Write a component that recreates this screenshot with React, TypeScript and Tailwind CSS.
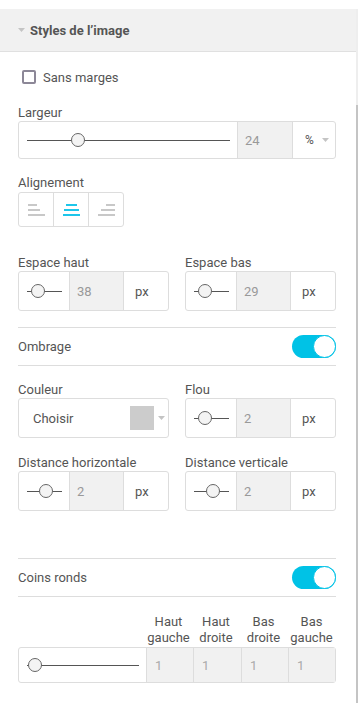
import React from 'react'

const Slider = ({ pos, className }: { pos: number; className?: string }) => (
  <div className={`relative h-full ${className ?? ''}`}>
    <div className="absolute left-[8px] right-[7px] top-1/2 h-px bg-[#555]" />
    <div
      className="absolute top-1/2 h-[14px] w-[14px] -translate-x-1/2 -translate-y-1/2 rounded-full border border-[#666] bg-[#f4f4f4]"
      style={{ left: pos }}
    />
  </div>
)

const Caret = ({ className }: { className?: string }) => (
  <svg width="7" height="4" viewBox="0 0 7 4" className={className}>
    <path d="M0 0h7L3.5 4z" fill="#c4c4c4" />
  </svg>
)

const Toggle = () => (
  <div className="flex h-[23px] w-[44px] items-center justify-end rounded-full bg-[#00c2e6]">
    <div className="h-[23px] w-[23px] rounded-full border-[1.5px] border-[#00c2e6] bg-white" />
  </div>
)

const AlignIcon = ({ kind, active }: { kind: 'l' | 'c' | 'r'; active?: boolean }) => {
  const c = active ? '#1ec6ea' : '#c8c8c8'
  const widths = kind === 'l' ? [9, 12, 17] : kind === 'c' ? [11, 15, 17] : [9, 14, 17]
  return (
    <svg width="17" height="12" viewBox="0 0 17 12">
      {widths.map((w, i) => {
        const x = kind === 'l' ? 0 : kind === 'c' ? (17 - w) / 2 : 17 - w
        return <rect key={i} x={x} y={i * 5} width={w} height="2" fill={c} />
      })}
    </svg>
  )
}

const Label = ({ children, className }: { children: React.ReactNode; className?: string }) => (
  <div className={`text-[13px] leading-[15px] text-[#555] ${className ?? ''}`}>{children}</div>
)

const SmallField = ({ label, value, pos }: { label: string; value: string; pos: number }) => (
  <div className="w-[151px]">
    <Label className="mb-[1px]">{label}</Label>
    <div className="flex h-[40px] rounded-[3px] border border-[#ddd]">
      <Slider pos={pos} className="w-[50px]" />
      <div className="flex w-[55px] items-center border-x border-[#ddd] bg-[#f1f1f1] pl-[7px] text-[13px] text-[#999]">
        {value}
      </div>
      <div className="flex flex-1 items-center pl-[11px] text-[13px] text-[#555]">px</div>
    </div>
  </div>
)

export default function App() {
  return (
    <div className="relative h-[703px] w-[358px] overflow-hidden bg-white font-['Roboto',sans-serif] leading-[15px] text-[#555]">
      {/* scrollbar */}
      <div className="absolute right-0 top-[9px] bottom-0 w-[2px] bg-[#eee]" />
      <div className="absolute right-0 top-[105px] bottom-0 w-[2px] bg-[#c4c4c4]" />

      <div className="pt-[9px] pr-[2px]">
        <div className="flex h-[43px] items-center border-b border-[#e0e0e0] bg-[#f1f1f1] pl-[18px]">
          <Caret className="mr-[5px]" />
          <span className="text-[13px] font-bold text-[#555]">Styles de l’image</span>
        </div>

        <div className="w-[318px] ml-[18px]">
          <label className="mt-[18px] ml-[4px] flex h-[14px] items-center">
            <span className="h-[14px] w-[14px] rounded-[2px] border-2 border-[#8c8797]" />
            <span className="ml-[7px] text-[13px] text-[#555]">Sans marges</span>
          </label>

          <Label className="mt-[21px] mb-[1px]">Largeur</Label>
          <div className="flex h-[38px] w-[318px] rounded-[3px] border border-[#ddd]">
            <Slider pos={59} className="w-[218px]" />
            <div className="flex w-[56px] items-center border-x border-[#ddd] bg-[#f1f1f1] pl-[7px] text-[13px] text-[#999]">
              24
            </div>
            <div className="flex flex-1 items-center pl-[12px] text-[12px] text-[#555]">
              <span>%</span>
              <Caret className="ml-[8px]" />
            </div>
          </div>

          <Label className="mt-[16px] mb-[2px]">Alignement</Label>
          <div className="flex h-[35px] w-[106px] rounded-[3px] border border-[#ddd]">
            <div className="flex flex-1 items-center justify-center">
              <AlignIcon kind="l" />
            </div>
            <div className="flex flex-1 items-center justify-center border-x border-[#ddd]">
              <AlignIcon kind="c" active />
            </div>
            <div className="flex flex-1 items-center justify-center">
              <AlignIcon kind="r" />
            </div>
          </div>

          <div className="mt-[28px] flex justify-between">
            <SmallField label="Espace haut" value="38" pos={19} />
            <SmallField label="Espace bas" value="29" pos={19} />
          </div>

          <div className="mt-[16px] flex h-[39px] items-center justify-between border-y border-[#ddd]">
            <span className="text-[13px] text-[#555]">Ombrage</span>
            <Toggle />
          </div>

          <div className="mt-[16px] flex justify-between">
            <div className="w-[151px]">
              <Label className="mb-[1px]">Couleur</Label>
              <div className="flex h-[40px] items-center rounded-[3px] border border-[#ddd] pl-[14px] pr-[3px]">
                <span className="flex-1 text-[13px] text-[#555]">Choisir</span>
                <span className="h-[24px] w-[24px] bg-[#ccc]" />
                <Caret className="ml-[4px]" />
              </div>
            </div>
            <SmallField label="Flou" value="2" pos={19} />
          </div>

          <div className="mt-[17px] flex justify-between">
            <SmallField label="Distance horizontale" value="2" pos={27} />
            <SmallField label="Distance verticale" value="2" pos={27} />
          </div>

          <div className="mt-[47px] flex h-[39px] items-center justify-between border-y border-[#ddd]">
            <span className="text-[13px] text-[#555]">Coins ronds</span>
            <Toggle />
          </div>

          <div className="mt-[17px] flex w-[318px] pl-[127px] text-center text-[13px] leading-[16px] text-[#555]">
            <div className="w-[47px]">Haut<br />gauche</div>
            <div className="w-[48px]">Haut<br />droite</div>
            <div className="w-[47px]">Bas<br />droite</div>
            <div className="flex-1">Bas<br />gauche</div>
          </div>
          <div className="mt-[1px] flex h-[36px] w-[318px] rounded-[3px] border border-[#ddd]">
            <Slider pos={16} className="w-[127px]" />
            {['1', '1', '1', '1'].map((v, i) => (
              <div
                key={i}
                className={`flex items-center border-l border-[#ddd] bg-[#f1f1f1] pl-[8px] text-[13px] text-[#aaa] ${
                  i === 1 ? 'w-[48px]' : i === 3 ? 'flex-1' : 'w-[47px]'
                }`}
              >
                {v}
              </div>
            ))}
          </div>
        </div>
      </div>
    </div>
  )
}
